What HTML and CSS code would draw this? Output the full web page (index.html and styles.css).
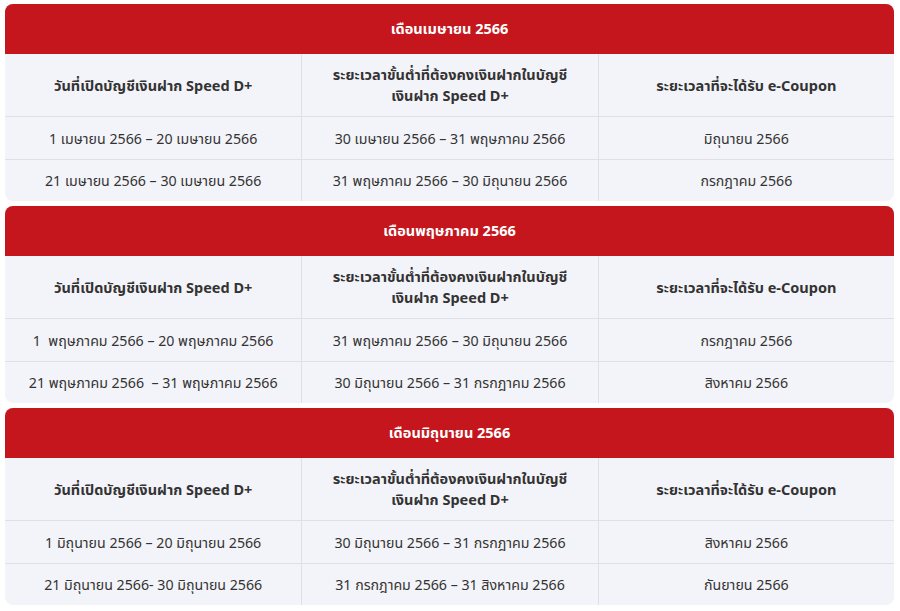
FILE: index.html
```html
<!DOCTYPE html>
<html lang="th">
<head>
<meta charset="utf-8">
<link rel="stylesheet" href="styles.css">
</head>
<body>
<div class="wrap">
  <section class="card">
    <div class="title">เดือนเมษายน 2566</div>
    <div class="grid">
      <div class="cell head">วันที่เปิดบัญชีเงินฝาก Speed D+</div>
      <div class="cell head">ระยะเวลาขั้นต่ำที่ต้องคงเงินฝากในบัญชี<br>เงินฝาก Speed D+</div>
      <div class="cell head">ระยะเวลาที่จะได้รับ e-Coupon</div>
      <div class="cell">1 เมษายน 2566 – 20 เมษายน 2566</div>
      <div class="cell">30 เมษายน 2566 – 31 พฤษภาคม 2566</div>
      <div class="cell">มิถุนายน 2566</div>
      <div class="cell">21 เมษายน 2566 – 30 เมษายน 2566</div>
      <div class="cell">31 พฤษภาคม 2566 – 30 มิถุนายน 2566</div>
      <div class="cell">กรกฎาคม 2566</div>
    </div>
  </section>
  <section class="card">
    <div class="title">เดือนพฤษภาคม 2566</div>
    <div class="grid">
      <div class="cell head">วันที่เปิดบัญชีเงินฝาก Speed D+</div>
      <div class="cell head">ระยะเวลาขั้นต่ำที่ต้องคงเงินฝากในบัญชี<br>เงินฝาก Speed D+</div>
      <div class="cell head">ระยะเวลาที่จะได้รับ e-Coupon</div>
      <div class="cell">1&nbsp; พฤษภาคม 2566 – 20 พฤษภาคม 2566</div>
      <div class="cell">31 พฤษภาคม 2566 – 30 มิถุนายน 2566</div>
      <div class="cell">กรกฎาคม 2566</div>
      <div class="cell">21 พฤษภาคม 2566&nbsp; – 31 พฤษภาคม 2566</div>
      <div class="cell">30 มิถุนายน 2566 – 31 กรกฎาคม 2566</div>
      <div class="cell">สิงหาคม 2566</div>
    </div>
  </section>
  <section class="card">
    <div class="title">เดือนมิถุนายน 2566</div>
    <div class="grid">
      <div class="cell head">วันที่เปิดบัญชีเงินฝาก Speed D+</div>
      <div class="cell head">ระยะเวลาขั้นต่ำที่ต้องคงเงินฝากในบัญชี<br>เงินฝาก Speed D+</div>
      <div class="cell head">ระยะเวลาที่จะได้รับ e-Coupon</div>
      <div class="cell">1 มิถุนายน 2566 – 20 มิถุนายน 2566</div>
      <div class="cell">30 มิถุนายน 2566 – 31 กรกฎาคม 2566</div>
      <div class="cell">สิงหาคม 2566</div>
      <div class="cell">21 มิถุนายน 2566- 30 มิถุนายน 2566</div>
      <div class="cell">31 กรกฎาคม 2566 – 31 สิงหาคม 2566</div>
      <div class="cell">กันยายน 2566</div>
    </div>
  </section>
</div>
</body>
</html>
```
FILE: styles.css
```css
html, body {
  margin: 0;
  padding: 0;
  background: #ffffff;
}
body {
  font-family: "Noto Sans", "Noto Sans Thai", sans-serif;
  font-size: 14.2px;
  color: #333333;
}
.wrap {
  display: flex;
  flex-direction: column;
  gap: 5px;
  padding: 4px 6px 0 5px;
}
.card {
  border-radius: 8px;
  overflow: hidden;
  background: #f3f4f9;
}
.title {
  background: #c4161c;
  color: #ffffff;
  font-weight: 700;
  font-size: 14.5px;
  text-align: center;
  height: 50px;
  display: flex;
  align-items: center;
  justify-content: center;
}
.grid {
  display: grid;
  grid-template-columns: 1fr 1fr 1fr;
}
.cell {
  box-sizing: border-box;
  display: flex;
  align-items: center;
  justify-content: center;
  text-align: center;
  height: 43px;
  line-height: 21px;
  border-top: 1px solid #dfe0e6;
  border-left: 1px solid #dfe0e6;
}
.cell:nth-child(n+7) {
  height: 42px;
}
.cell:nth-child(3n+1) {
  border-left: none;
}
.cell.head {
  height: 62px;
  font-weight: 700;
  font-size: 14.5px;
  border-top: none;
}
```
